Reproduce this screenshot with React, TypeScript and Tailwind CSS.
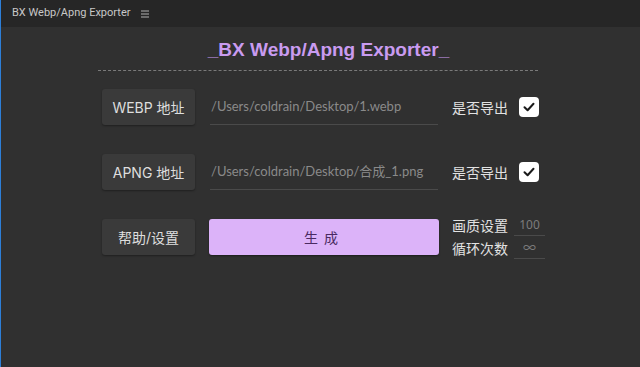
import React from 'react'

const cjk = '[font-family:"Noto_Sans","Noto_Sans_CJK_SC",sans-serif]'
const btnFont = '[font-family:"Inter","Noto_Sans_CJK_SC",sans-serif]'
const pathFont = '[font-family:"Lato","Noto_Sans_CJK_SC",sans-serif]'

function Check() {
    return (
        <div className="flex h-[20px] w-[20px] items-center justify-center rounded-[4px] bg-white">
            <svg width="14" height="14" viewBox="0 0 14 14" fill="none">
                <path d="M2.5 7.2 L5.6 10.2 L11.5 3.8" stroke="#1a1a1a" strokeWidth="2" strokeLinecap="round" strokeLinejoin="round" />
            </svg>
        </div>
    )
}

function GrayButton({ label }: { label: string }) {
    return (
        <button className={`flex h-[36px] w-[93px] shrink-0 items-center justify-center rounded-[3px] bg-[#3a3a3a] text-[14px] text-[#dedede] shadow-[0_1px_2px_rgba(0,0,0,0.35)] ${btnFont}`}>
            {label}
        </button>
    )
}

function PathRow({ label, value }: { label: string; value: string }) {
    return (
        <div className="flex h-[36px] items-center">
            <GrayButton label={label} />
            <div className="ml-[15px] flex h-[36px] w-[228px] items-center border-b border-[#4a4a4a] pl-[1px]">
                <span className={`text-[13px] text-[#8a8a8a] ${pathFont}`}>{value}</span>
            </div>
            <span className={`ml-[14px] text-[14px] text-[#e2e2e2] ${cjk}`}>是否导出</span>
            <div className="ml-[11px]">
                <Check />
            </div>
        </div>
    )
}

function SmallField({ label, value, wide }: { label: string; value: string; wide?: boolean }) {
    return (
        <div className="flex h-[23px] items-center">
            <span className={`text-[14px] text-[#e2e2e2] ${cjk}`}>{label}</span>
            <div className="ml-[6px] flex h-[20px] w-[31px] items-center justify-center border-b border-[#4a4a4a]">
                <span className={`${wide ? 'text-[13px]' : 'text-[12px]'} text-[#7c7c7c] ${cjk}`}>{value}</span>
            </div>
        </div>
    )
}

export default function App() {
    return (
        <div className="flex h-[367px] w-[640px] flex-col overflow-hidden border-l border-[#2d7fd8] bg-[#303030]">
            {/* Panel tab */}
            <div className="flex h-[27px] shrink-0 items-center bg-[#262626] pl-[11px]">
                <span className="[font-family:'Roboto',sans-serif] text-[11px] text-[#c8c8c8]">BX Webp/Apng Exporter</span>
                <svg className="ml-[11px]" width="8" height="8" viewBox="0 0 8 8">
                    <path d="M0 1h8M0 4h8M0 7h8" stroke="#b0b0b0" strokeWidth="1" />
                </svg>
            </div>

            <div className="flex flex-col">
                <h1 className="mt-[10px] pl-[16px] text-center [font-family:'Liberation_Sans',sans-serif] text-[19px] font-bold leading-[26px] text-[#c99bf0]">
                    _BX Webp/Apng Exporter_
                </h1>
                <div className="mt-[7px] ml-[97px] w-[440px] border-t border-dashed border-[#7a7a7a]" />

                <div className="mt-[18px] ml-[101px] flex flex-col gap-[29px]">
                    <PathRow label="WEBP 地址" value="/Users/coldrain/Desktop/1.webp" />
                    <PathRow label="APNG 地址" value="/Users/coldrain/Desktop/合成_1.png" />

                    <div className="flex h-[36px] items-center">
                        <GrayButton label="帮助/设置" />
                        <button className={`ml-[14px] flex h-[36px] w-[230px] items-center justify-center rounded-[3px] bg-[#dcb3f9] text-[14px] tracking-[6px] text-[#4a2a62] shadow-[0_1px_2px_rgba(0,0,0,0.4)] ${cjk}`}>
                            生成
                        </button>
                        <div className="ml-[13px] flex flex-col">
                            <SmallField label="画质设置" value="100" />
                            <SmallField label="循环次数" value="∞" wide />
                        </div>
                    </div>
                </div>
            </div>
        </div>
    )
}
